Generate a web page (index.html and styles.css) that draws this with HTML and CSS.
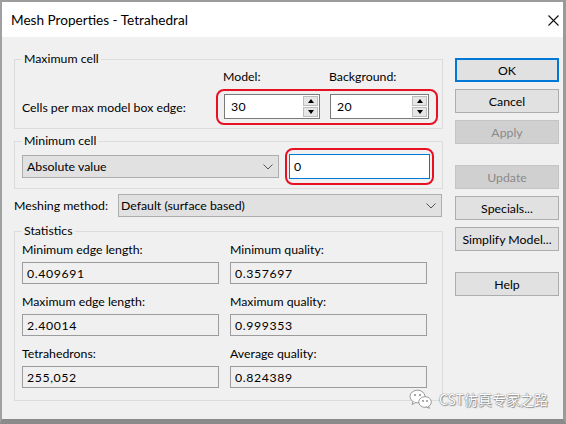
FILE: index.html
```html
<!DOCTYPE html>
<html>
<head>
<meta charset="utf-8">
<link rel="stylesheet" href="styles.css">
</head>
<body>
<div class="window">
  <div class="titlebar">
    <span class="title">Mesh Properties - Tetrahedral</span>
    <svg class="close" width="11" height="11" viewBox="0 0 11 11"><path d="M0.5 0.5 L10.5 10.5 M10.5 0.5 L0.5 10.5" stroke="#111" stroke-width="1.1" fill="none"/></svg>
  </div>
  <div class="content">
    <div class="left">
      <fieldset class="group group-max">
        <legend>Maximum cell</legend>
        <div class="heads"><span class="head-model">Model:</span><span>Background:</span></div>
        <div class="row">
          <span class="lbl">Cells per max model box edge:</span>
          <div class="mark mark-spin">
            <div class="spin spin-model"><span>30</span><div class="spin-btns"><span class="sb up"></span><span class="sb down"></span></div></div>
            <div class="spin spin-bg"><span>20</span><div class="spin-btns"><span class="sb up"></span><span class="sb down"></span></div></div>
          </div>
        </div>
      </fieldset>
      <fieldset class="group group-min">
        <legend>Minimum cell</legend>
        <div class="row-min">
          <div class="combo combo-abs"><span>Absolute value</span><svg class="chev" width="10" height="6" viewBox="0 0 10 6"><path d="M0.5 0.5 L5 5 L9.5 0.5" stroke="#555" stroke-width="1" fill="none"/></svg></div>
          <div class="mark mark-edit"><div class="edit">0</div></div>
        </div>
      </fieldset>
      <div class="mesh-row">
        <span class="mesh-lbl">Meshing method:</span>
        <div class="combo combo-mesh"><span>Default (surface based)</span><svg class="chev" width="10" height="6" viewBox="0 0 10 6"><path d="M0.5 0.5 L5 5 L9.5 0.5" stroke="#555" stroke-width="1" fill="none"/></svg></div>
      </div>
      <fieldset class="group group-stats">
        <legend>Statistics</legend>
        <div class="stats">
          <div class="stat"><span class="stat-lbl">Minimum edge length:</span><div class="ro">0.409691</div></div>
          <div class="stat"><span class="stat-lbl">Minimum quality:</span><div class="ro">0.357697</div></div>
          <div class="stat"><span class="stat-lbl">Maximum edge length:</span><div class="ro">2.40014</div></div>
          <div class="stat"><span class="stat-lbl">Maximum quality:</span><div class="ro">0.999353</div></div>
          <div class="stat"><span class="stat-lbl">Tetrahedrons:</span><div class="ro">255,052</div></div>
          <div class="stat"><span class="stat-lbl">Average quality:</span><div class="ro">0.824389</div></div>
        </div>
      </fieldset>
    </div>
    <div class="buttons">
      <div class="btn btn-default">OK</div>
      <div class="btn">Cancel</div>
      <div class="btn btn-disabled btn-sep">Apply</div>
      <div class="btn btn-disabled">Update</div>
      <div class="btn">Specials...</div>
      <div class="btn btn-sep">Simplify Model...</div>
      <div class="btn">Help</div>
    </div>
  </div>
  <div class="watermark">
    <svg class="wx" width="24" height="20" viewBox="0 0 24 20">
      <ellipse cx="8.5" cy="7.5" rx="7.5" ry="6.3" fill="#fff" stroke="#9a9a9a" stroke-width="1"/>
      <path d="M4 12.5 L3 15.5 L7 13.4" fill="#fff" stroke="#9a9a9a" stroke-width="1"/>
      <circle cx="6" cy="6" r="1" fill="#888"/>
      <circle cx="11" cy="6" r="1" fill="#888"/>
      <ellipse cx="16" cy="13" rx="6.3" ry="5.3" fill="#fff" stroke="#9a9a9a" stroke-width="1"/>
      <path d="M19.5 17 L20.5 19.3 L17 17.9" fill="#fff" stroke="#9a9a9a" stroke-width="1"/>
      <circle cx="14" cy="12" r="0.9" fill="#888"/>
      <circle cx="18" cy="12" r="0.9" fill="#888"/>
    </svg>
    <span class="wm-text">CST仿真专家之路</span>
  </div>
</div>
</body>
</html>
```
FILE: styles.css
```css
* { box-sizing: border-box; }
html, body { margin: 0; padding: 0; }
body {
  background: #8c8c8c;
  font-family: Lato, "Noto Sans", sans-serif;
  font-size: 12.3px;
  color: #000;
}
.window {
  position: relative;
  width: 566px;
  height: 424px;
  border-style: solid;
  border-color: #9c9c9c #9a9a9a #8a8a8a #a0a0a0;
  border-width: 2px 3px 5px 2px;
  background: #f0f0f0;
  display: flex;
  flex-direction: column;
}
.titlebar {
  height: 35px;
  background: #fff;
  display: flex;
  align-items: center;
  justify-content: space-between;
  padding: 0 4px 0 9px;
  flex: none;
}
.title { font-size: 13.6px; }
.close { margin-top: 2px; }
.content {
  display: flex;
  padding: 14px 4px 0 12px;
  gap: 12px;
}
.left { width: 429px; display: flex; flex-direction: column; }
.buttons { width: 104px; display: flex; flex-direction: column; padding-top: 7px; }

.group {
  margin: 0;
  padding: 0 4px 3px 7px;
  border: 1px solid #dcdcdc;
  min-width: 0;
}
.group legend {
  padding: 0 2px;
  line-height: 16px;
  height: 16px;
}
.heads {
  display: flex;
  margin-left: auto;
  width: 222px;
  padding-left: 7px;
  margin-top: 2px;
  line-height: 16px;
  height: 16px;
}
.head-model { width: 106px; }
.row { display: flex; align-items: center; margin-top: 4px; }
.lbl { flex: 1; }
.mark { border: 2px solid #e81123; border-radius: 8px; }
.mark-spin {
  display: flex;
  gap: 10px;
  padding: 3px 7px 4px 6px;
  width: 222px;
}
.spin {
  height: 25px;
  border: 1px solid #7a7a7a;
  background: #fff;
  display: flex;
  align-items: center;
  padding: 0 1px 0 6px;
  letter-spacing: 0.4px;
}
.spin-model { width: 96px; }
.spin-bg { width: 99px; }
.spin-btns {
  margin-left: auto;
  display: flex;
  flex-direction: column;
  gap: 1px;
}
.sb {
  width: 15px;
  height: 10px;
  background: #e6e6e6;
  border: 1px solid #bcbcbc;
  display: flex;
  align-items: center;
  justify-content: center;
}
.sb::after {
  content: "";
  width: 0;
  height: 0;
  border-left: 3px solid transparent;
  border-right: 3px solid transparent;
}
.up::after { border-bottom: 4px solid #000; }
.down::after { border-top: 4px solid #000; }

.group-min { margin-top: 4px; padding-right: 8px; }
.row-min { display: flex; align-items: center; gap: 6px; margin-top: -1px; }
.combo {
  height: 23px;
  background: #e1e1e1;
  border: 1px solid #adadad;
  display: flex;
  align-items: center;
  justify-content: space-between;
  padding: 0 5px 0 4px;
}
.combo-abs { width: 257px; }
.mark-edit { flex: 1; padding: 4px 2px; }
.edit {
  height: 25px;
  border: 1px solid #0078d7;
  background: #fff;
  padding-left: 4px;
  display: flex;
  align-items: center;
}
.mesh-row { display: flex; align-items: center; margin-top: 5px; }
.mesh-lbl { width: 104px; }
.combo-mesh { flex: 1; margin-right: 1px; padding-left: 2px; }

.group-stats { margin-top: 6px; padding-bottom: 12px; }
.stats {
  display: grid;
  grid-template-columns: 197px 197px;
  column-gap: 11px;
  row-gap: 10px;
  margin-top: 3px;
}
.stat-lbl { display: block; line-height: 16px; }
.ro {
  margin-top: 4px;
  height: 22px;
  border: 1px solid #9c9c9c;
  padding-left: 4px;
  display: flex;
  align-items: center;
  letter-spacing: 0.6px;
}

.btn {
  height: 24px;
  border: 1px solid #adadad;
  background: #e1e1e1;
  display: flex;
  align-items: center;
  justify-content: center;
  margin-bottom: 7px;
}
.btn-default { border: 2px solid #0078d7; }
.btn-disabled { background: #d0d0d0; border-color: #c4c4c4; color: #8a8a8a; }
.btn-sep { margin-bottom: 21px; }

.watermark {
  position: absolute;
  right: 15px;
  bottom: 10px;
  display: flex;
  align-items: center;
  gap: 6px;
}
.wm-text {
  font-family: "Noto Sans CJK SC", sans-serif;
  font-size: 14px;
  line-height: 18px;
  color: #fff;
  text-shadow: 0 0 1px #777, 0 0 1px #777, 1px 1px 1px #999;
}
```
